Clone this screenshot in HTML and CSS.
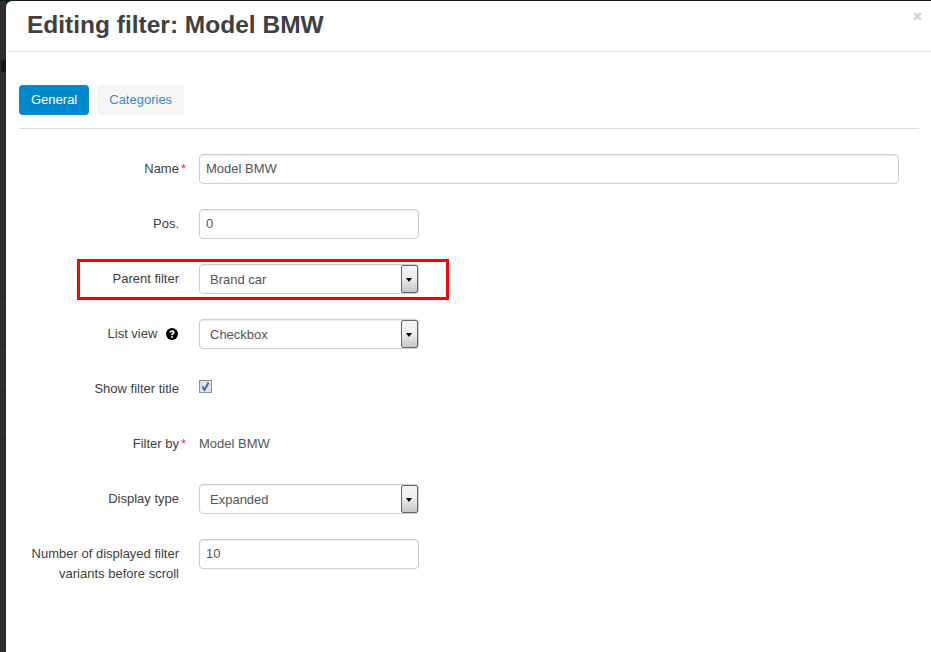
FILE: index.html
```html
<!DOCTYPE html><html><head><meta charset="utf-8">
<title>Editing filter: Model BMW</title>
<link rel="stylesheet" href="styles.css">
</head><body>

<div class="backdrop">
	<i class="ghost ghost-a"></i>
	<i class="ghost ghost-b"></i>
</div>

<div class="modal">
	<div class="modal-head">
		<h1>Editing filter: Model BMW</h1>
		<span class="close">&#10006;</span>
	</div>
	<div class="modal-body">
		<ul class="tabs">
			<li class="active">General</li>
			<li>Categories</li>
		</ul>

		<form class="form">
			<div class="row">
				<label>Name<span class="req">*</span></label>
				<input class="input wide" type="text" value="Model BMW">
			</div>
			<div class="row">
				<label>Pos.</label>
				<input class="input" type="text" value="0">
			</div>
			<div class="row marked">
				<label>Parent filter</label>
				<div class="select"><span>Brand car</span><b></b></div>
			</div>
			<div class="row">
				<label>List view
					<svg class="help" viewBox="0 0 24 24"><circle cx="12" cy="12" r="12" fill="#000"/><path d="M6.800 9.200c.2-3 2.400-4.800 5.400-4.800 2.900 0 5 1.700 5 4.200 0 1.900-1 2.900-2.300 3.700-1 .7-1.300 1.100-1.300 2.200h-3.300c-.1-2.100.5-3.200 1.900-4.200.9-.7 1.500-1.100 1.500-1.800 0-.8-.6-1.200-1.500-1.200-1 0-1.700.7-1.800 1.900z" fill="#fff"/><rect x="10.300" y="16.200" width="3.300" height="3.300" fill="#fff"/></svg>
				</label>
				<div class="select"><span>Checkbox</span><b></b></div>
			</div>
			<div class="row">
				<label>Show filter title</label>
				<span class="check">
					<svg viewBox="0 0 11 11"><path d="M2.500 5.500 L4.500 9 L8.500 1.500" fill="none" stroke="#4a5a9e" stroke-width="1.700"/></svg>
				</span>
			</div>
			<div class="row">
				<label>Filter by<span class="req">*</span></label>
				<div class="plain">Model BMW</div>
			</div>
			<div class="row">
				<label>Display type</label>
				<div class="select"><span>Expanded</span><b></b></div>
			</div>
			<div class="row">
				<label class="two-line">Number of displayed filter variants before scroll</label>
				<input class="input" type="text" value="10">
			</div>
		</form>
	</div>
</div>

</body></html>
```
FILE: styles.css
```css
html, body {
	margin: 0;
	height: 100%;
	overflow: hidden;
}
body {
	font-family: "Liberation Sans", Arial, sans-serif;
	font-size: 13px;
	color: #404040;
	background: #0d1a20;
	padding: 1px 0 0 6px;
	box-sizing: border-box;
}
.backdrop {
	position: absolute;
	left: 0;
	top: 1px;
	bottom: 0;
	width: 6px;
	background: repeating-linear-gradient(#2e2e2e 0 46px, #262626 46px 47px);
	background-position: 0 15px;
}
.ghost {
	position: absolute;
	left: 1px;
	width: 5px;
	background: #141414;
}
.ghost-a {
	top: 59px;
	height: 12px;
}
.ghost-b {
	top: 122px;
	height: 9px;
	background: #20303a;
}
.modal {
	background: #fff;
	height: 100%;
	border-top-left-radius: 6px;
}
.modal-head {
	display: flex;
	justify-content: space-between;
	height: 50px;
	padding-left: 21px;
	border-bottom: 1px solid #e8e8e8;
}
.modal-head h1 {
	margin: 0;
	font-size: 24.500px;
	line-height: 48px;
	font-weight: bold;
	color: #404040;
}
.close {
	margin: 8px 8px 0 0;
	font-size: 13px;
	line-height: 16px;
	color: #d6d6d6;
}
.modal-body {
	padding: 33px 12px 0 13px;
}
.tabs {
	display: flex;
	gap: 8px;
	margin: 0;
	padding: 0 0 13px;
	list-style: none;
	border-bottom: 1px solid #ddd;
}
.tabs li {
	height: 30px;
	line-height: 30px;
	padding: 0 12px;
	border-radius: 4px;
	background: #f6f6f6;
	color: #3f86d0;
}
.tabs li.active {
	background: #0088cc;
	color: #fff;
}
.form {
	display: flex;
	flex-direction: column;
	gap: 25px;
	padding-top: 25px;
}
.row {
	position: relative;
	display: flex;
	gap: 20px;
	height: 30px;
}
.row label {
	flex: none;
	width: 160px;
	line-height: 29px;
	text-align: right;
}
.row label.two-line {
	line-height: 20px;
	padding-top: 5px;
}
.req {
	color: #e33;
	margin: 0 -7px 0 2px;
}
.help {
	width: 12px;
	height: 12px;
	margin: 0 1px -2px 5px;
}
.input {
	box-sizing: border-box;
	width: 220px;
	height: 30px;
	padding: 0 6px 2px;
	border: 1px solid #ccc;
	border-radius: 4px;
	box-shadow: inset 0 1px 1px rgba(0, 0, 0, .075);
	font: 13px "Liberation Sans", Arial, sans-serif;
	color: #555;
}
.input.wide {
	width: 700px;
}
.select {
	box-sizing: border-box;
	display: flex;
	justify-content: space-between;
	width: 220px;
	height: 30px;
	padding-left: 10px;
	border: 1px solid #ccc;
	border-radius: 4px;
	box-shadow: inset 0 1px 1px rgba(0, 0, 0, .075);
	line-height: 30px;
	color: #555;
}
.select b {
	position: relative;
	width: 15px;
	border: 1px solid #666;
	border-radius: 2px;
	background: linear-gradient(#f4f4f4, #eee 45%, #c6c6c6);
}
.select b::after {
	content: "";
	position: absolute;
	left: 4px;
	top: 12px;
	border: 3px solid transparent;
	border-top: 4px solid #000;
	border-bottom: 0;
}
.marked::after {
	content: "";
	position: absolute;
	left: 58px;
	top: -5px;
	width: 366px;
	height: 35px;
	border: 3px solid #f00;
	pointer-events: none;
}
.check {
	box-sizing: border-box;
	width: 13px;
	height: 13px;
	margin-top: 6px;
	border: 1px solid #8f8f9d;
	background: #dde2ee;
}
.check svg {
	display: block;
	width: 11px;
	height: 11px;
}
.plain {
	line-height: 29px;
	color: #555;
}
```
